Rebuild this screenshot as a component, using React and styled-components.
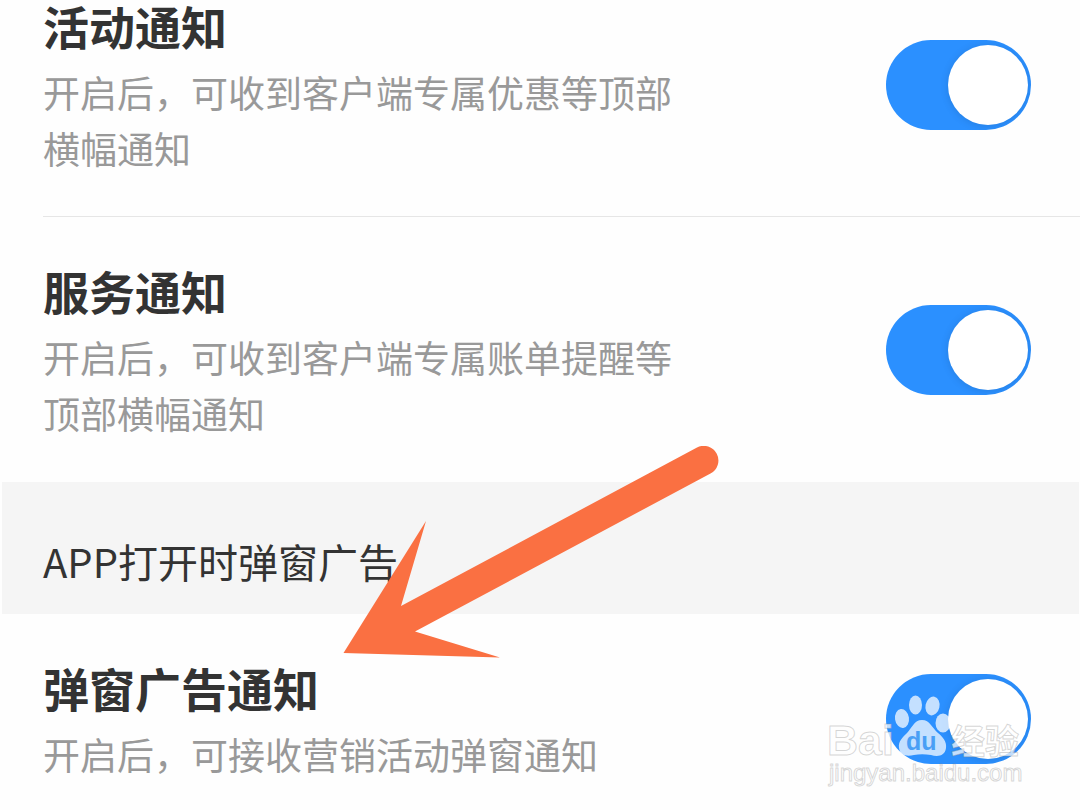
import { useState } from 'react';
import styled, { createGlobalStyle } from 'styled-components'

const GlobalStyle = createGlobalStyle`
  body {
    background-color: #fefefe;
    font-family: "Noto Sans CJK SC", "Noto Sans", sans-serif;
    margin: 0;
  }
`;

const Page = styled.main`
  overflow: hidden;
  position: relative;
`;

const Row = styled.label`
  align-items: center;
  border-bottom: 1px solid ${(props) => (props.$divider ? '#e6e6e6' : 'transparent')};
  cursor: pointer;
  display: flex;
  justify-content: space-between;
  margin-left: 43px;
  padding: ${(props) => (props.$first ? '0' : '48px')} 49px ${(props) => (props.$last ? '24px' : '40px')} 0;
`;

const RowText = styled.span`
  display: flex;
  flex-direction: column;
  gap: 14px;
  max-width: 640px;
`;

const Title = styled.span`
  color: #333;
  font-size: 46px;
  font-weight: bold;
  line-height: 50px;
`;

const Description = styled.span`
  color: #999;
  font-size: 37px;
  line-height: 56px;
`;

const Switch = styled.input`
  appearance: none;
  background-color: #2b90ff;
  border-radius: 45px;
  cursor: pointer;
  display: flex;
  flex-shrink: 0;
  height: 90px;
  justify-content: flex-end;
  margin: 0 0 6px;
  overflow: hidden;
  padding: 5px 3px;
  width: 145px;

  &::before {
    background-color: #fff;
    border-radius: 50%;
    box-shadow: 0 1px 8px rgba(0, 0, 0, 0.12);
    content: '';
    height: 80px;
    width: 80px;
  }

  &:not(:checked) {
    background-color: #ddd;
    justify-content: flex-start;
  }
`;

const SectionTitle = styled.h2`
  background-color: #f5f5f5;
  color: #333;
  font-size: 40px;
  font-weight: normal;
  line-height: 56px;
  margin: 0 1px 0 2px;
  padding: 51px 41px 25px;
`;

const Arrow = styled.svg`
  left: 343px;
  pointer-events: none;
  position: absolute;
  top: 446px;
`;

const Watermark = styled.svg`
  bottom: 13px;
  pointer-events: none;
  position: absolute;
  right: 52px;
`;

const NoticeRow = ({ title, description, ...rest }) => {
  const [checked, setChecked] = useState(true);

  return (
    <Row {...rest}>
      <RowText>
        <Title>{title}</Title>
        <Description>{description}</Description>
      </RowText>
      <Switch
        type="checkbox"
        checked={checked}
        onChange={(e) => setChecked(e.target.checked)}
      />
    </Row>
  )
}

const App = () => {
  return (
    <>
      <GlobalStyle />
      <Page>
        <NoticeRow
          $first
          $divider
          title="活动通知"
          description="开启后，可收到客户端专属优惠等顶部横幅通知"
        />
        <NoticeRow
          title="服务通知"
          description="开启后，可收到客户端专属账单提醒等顶部横幅通知"
        />
        <SectionTitle>APP打开时弹窗广告</SectionTitle>
        <NoticeRow
          $last
          title="弹窗广告通知"
          description="开启后，可接收营销活动弹窗通知"
        />
        <Arrow width="376" height="214" viewBox="343 446 376 214" aria-hidden="true">
          <path
            fill="#fa7042"
            d="M343.500 653L426 521L401 606L697 447.500A14.300 14.300 0 0 1 710.500 473.500L415 631.500L500 657.500Z"
          />
        </Arrow>
        <Watermark width="202" height="104" viewBox="826 690 202 104">
          <g fill="#fff" fillOpacity="0.72" stroke="#888" strokeOpacity="0.34" strokeWidth="1">
            <text x="827" y="755" fontSize="43" fontWeight="bold" fontFamily="Liberation Sans, sans-serif">Bai</text>
            <text x="951" y="754" fontSize="34" fontWeight="bold" fontFamily="Noto Sans CJK SC, sans-serif">经验</text>
            <text x="829" y="781" fontSize="24" fontFamily="Liberation Sans, sans-serif">jingyan.baidu.com</text>
          </g>
          <g fill="#fff" fillOpacity="0.72">
            <ellipse cx="902" cy="718.500" rx="7" ry="9.500" transform="rotate(-8 902 718.500)" />
            <ellipse cx="915.500" cy="705" rx="6.500" ry="9.500" />
            <ellipse cx="932.500" cy="706" rx="7" ry="9.500" transform="rotate(12 932.500 706)" />
            <ellipse cx="943" cy="723" rx="7.500" ry="9.500" />
            <path d="M922 720C930 720 932 728 938 733C943 737 947 742 946 748C945 756 938 757 931 755C925 754 919 754 914 755C906 757 900 755 899 748C898 741 903 737 907 733C912 728 914 720 922 720Z" />
          </g>
          <text x="906" y="750" fontSize="25" fontWeight="bold" fontFamily="Liberation Sans, sans-serif" fill="#4a9ff5">du</text>
        </Watermark>
      </Page>
    </>
  )
}

export default App
